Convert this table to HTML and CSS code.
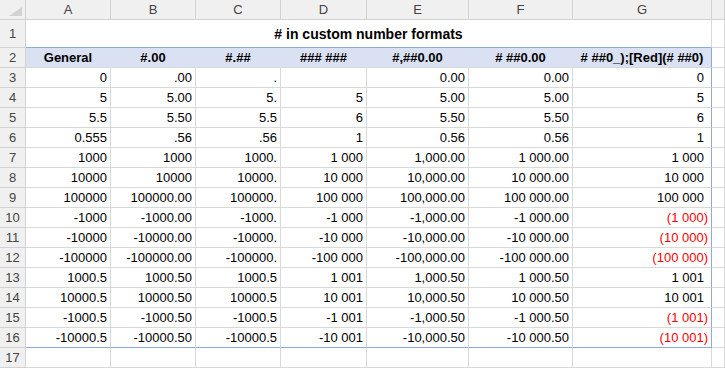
FILE: index.html
```
<!DOCTYPE html>
<html>
<head>
    <title># in custom number formats</title>
    <link rel="stylesheet" href="styles.css">
</head>
<body>
<div class="sheet" id="sheet">
    <div class="cell hd corner">
        <svg width="13" height="9" viewBox="0 0 13 9"><polygon points="13,0 13,9 0,9" fill="#d2d2d2"/></svg>
    </div>
    <div class="cell hd">A</div>
    <div class="cell hd">B</div>
    <div class="cell hd">C</div>
    <div class="cell hd">D</div>
    <div class="cell hd">E</div>
    <div class="cell hd">F</div>
    <div class="cell hd">G</div>
    <div class="cell hd"></div>

    <div class="cell hd">1</div>
    <div class="cell title"># in custom number formats</div>
    <div class="cell"></div>

    <div class="cell hd">2</div>
    <div class="cell th">General</div>
    <div class="cell th">#.00</div>
    <div class="cell th">#.##</div>
    <div class="cell th">### ###</div>
    <div class="cell th">#,##0.00</div>
    <div class="cell th"># ##0.00</div>
    <div class="cell th last"># ##0_);[Red](# ##0)</div>
    <div class="cell"></div>
</div>

<script>
    const rows = [
        ['0', '.00', '.', '', '0.00', '0.00', '0'],
        ['5', '5.00', '5.', '5', '5.00', '5.00', '5'],
        ['5.5', '5.50', '5.5', '6', '5.50', '5.50', '6'],
        ['0.555', '.56', '.56', '1', '0.56', '0.56', '1'],
        ['1000', '1000', '1000.', '1 000', '1,000.00', '1 000.00', '1 000'],
        ['10000', '10000', '10000.', '10 000', '10,000.00', '10 000.00', '10 000'],
        ['100000', '100000.00', '100000.', '100 000', '100,000.00', '100 000.00', '100 000'],
        ['-1000', '-1000.00', '-1000.', '-1 000', '-1,000.00', '-1 000.00', '(1 000)'],
        ['-10000', '-10000.00', '-10000.', '-10 000', '-10,000.00', '-10 000.00', '(10 000)'],
        ['-100000', '-100000.00', '-100000.', '-100 000', '-100,000.00', '-100 000.00', '(100 000)'],
        ['1000.5', '1000.50', '1000.5', '1 001', '1,000.50', '1 000.50', '1 001'],
        ['10000.5', '10000.50', '10000.5', '10 001', '10,000.50', '10 000.50', '10 001'],
        ['-1000.5', '-1000.50', '-1000.5', '-1 001', '-1,000.50', '-1 000.50', '(1 001)'],
        ['-10000.5', '-10000.50', '-10000.5', '-10 001', '-10,000.50', '-10 000.50', '(10 001)']
    ];

    const sheet = document.getElementById('sheet');

    function addCell(text, className) {
        const cell = document.createElement('div');
        cell.className = 'cell' + (className ? ' ' + className : '');
        cell.textContent = text;
        sheet.appendChild(cell);
    }

    rows.forEach((row, i) => {
        const isLast = i === rows.length - 1;
        addCell(String(i + 3), 'hd');
        row.forEach((value, j) => {
            let cls = isLast ? 'bottom' : '';
            if (j === row.length - 1) {
                cls += value.startsWith('(') ? ' last neg' : ' last pos';
            }
            addCell(value, cls.trim());
        });
        addCell('', '');
    });

    // empty row 17
    addCell('17', 'hd');
    for (let j = 0; j < 8; j++) {
        addCell('', '');
    }
</script>
</body>
</html>
```

FILE: styles.css
```
body {
    margin: 0;
    font-family: "Liberation Sans", Arial, sans-serif;
    font-size: 13px;
    color: #000000;
    background-color: #ffffff;
    overflow: hidden;
}

.sheet {
    display: grid;
    grid-template-columns: 26px 85px 85px 85px 86px 102px 104px 139px 1fr;
    grid-template-rows: 20px 28px repeat(16, 20px);
    width: 725px;
}

.cell {
    box-sizing: border-box;
    display: flex;
    align-items: center;
    justify-content: flex-end;
    padding: 0 3px;
    border-right: 1px solid #d9d9d9;
    border-bottom: 1px solid #d9d9d9;
    white-space: nowrap;
    overflow: hidden;
}

.hd {
    justify-content: center;
    padding: 0;
    background-color: #f0f0f0;
    color: #444444;
    border-color: #d2d2d2;
}

.corner {
    justify-content: flex-end;
    align-items: flex-end;
    padding: 0 3px 3px 0;
}

.title {
    grid-column: span 7;
    justify-content: center;
    font-size: 14px;
    font-weight: bold;
    padding-top: 1px;
    border-bottom-color: #8ea9db;
}

.th {
    justify-content: center;
    font-weight: bold;
    background-color: #d9e1f2;
    border-right-color: #d9e1f2;
}

.th.last,
.last {
    border-right-color: #8ea9db;
}

.bottom {
    border-bottom-color: #8ea9db;
}

.pos {
    padding-right: 7px;
}

.neg {
    color: #ff0000;
}
```
